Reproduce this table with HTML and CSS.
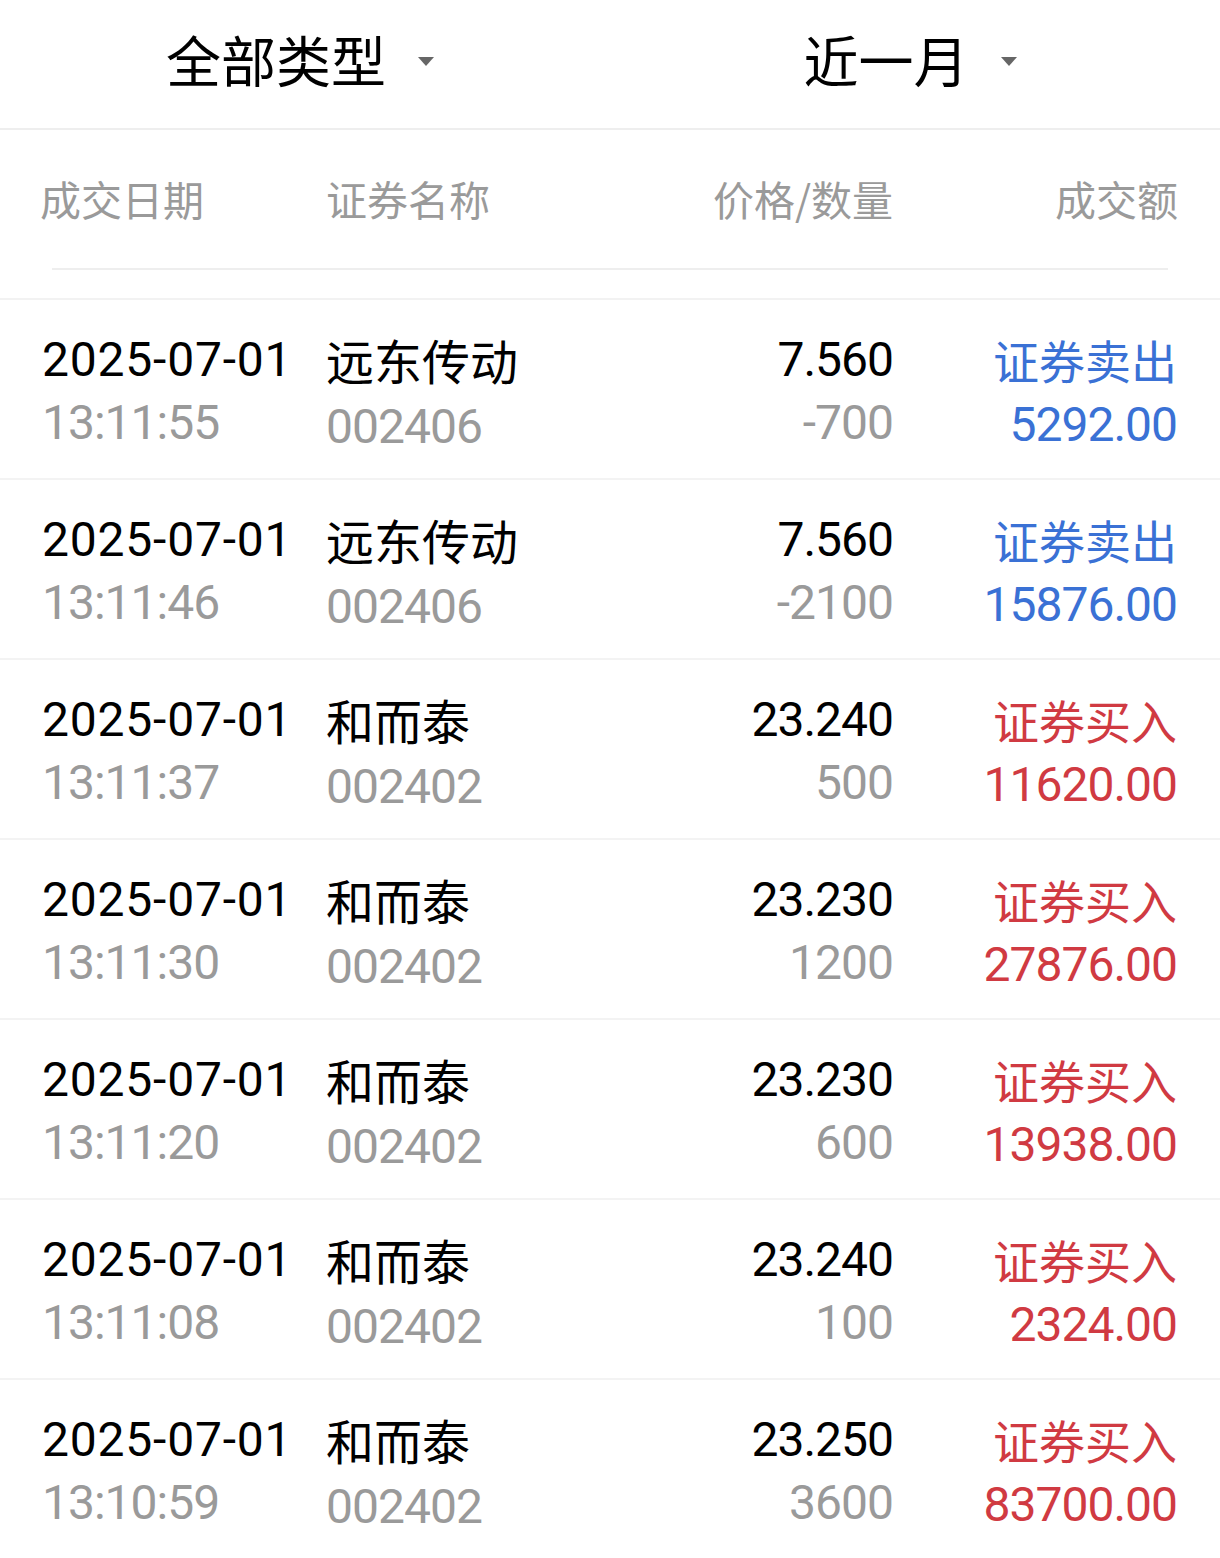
FILE: index.html
```html
<!DOCTYPE html>
<html lang="zh-CN">
<head>
<meta charset="utf-8">
<title>成交记录</title>
<link rel="stylesheet" href="styles.css">
</head>
<body>
<div class="page">
  <div class="tabs">
    <div class="tab"><span class="tab-label">全部类型</span><span class="caret"></span></div>
    <div class="tab"><span class="tab-label">近一月</span><span class="caret"></span></div>
  </div>

  <div class="thead">
    <div class="thead-row">
      <div class="th c-date">成交日期</div>
      <div class="th c-name">证券名称</div>
      <div class="th c-price">价格/数量</div>
      <div class="th c-amt">成交额</div>
    </div>
    <div class="thead-line"></div>
  </div>

  <div class="list">
    <div class="row sell">
      <div class="cell c-date"><span class="l1 date">2025-07-01</span><span class="l2">13:11:55</span></div>
      <div class="cell c-name"><span class="l1">远东传动</span><span class="l2 code">002406</span></div>
      <div class="cell c-price"><span class="l1">7.560</span><span class="l2">-700</span></div>
      <div class="cell c-amt"><span class="l1 kind">证券卖出</span><span class="l2 money">5292.00</span></div>
    </div>
    <div class="row sell">
      <div class="cell c-date"><span class="l1 date">2025-07-01</span><span class="l2">13:11:46</span></div>
      <div class="cell c-name"><span class="l1">远东传动</span><span class="l2 code">002406</span></div>
      <div class="cell c-price"><span class="l1">7.560</span><span class="l2">-2100</span></div>
      <div class="cell c-amt"><span class="l1 kind">证券卖出</span><span class="l2 money">15876.00</span></div>
    </div>
    <div class="row buy">
      <div class="cell c-date"><span class="l1 date">2025-07-01</span><span class="l2">13:11:37</span></div>
      <div class="cell c-name"><span class="l1">和而泰</span><span class="l2 code">002402</span></div>
      <div class="cell c-price"><span class="l1">23.240</span><span class="l2">500</span></div>
      <div class="cell c-amt"><span class="l1 kind">证券买入</span><span class="l2 money">11620.00</span></div>
    </div>
    <div class="row buy">
      <div class="cell c-date"><span class="l1 date">2025-07-01</span><span class="l2">13:11:30</span></div>
      <div class="cell c-name"><span class="l1">和而泰</span><span class="l2 code">002402</span></div>
      <div class="cell c-price"><span class="l1">23.230</span><span class="l2">1200</span></div>
      <div class="cell c-amt"><span class="l1 kind">证券买入</span><span class="l2 money">27876.00</span></div>
    </div>
    <div class="row buy">
      <div class="cell c-date"><span class="l1 date">2025-07-01</span><span class="l2">13:11:20</span></div>
      <div class="cell c-name"><span class="l1">和而泰</span><span class="l2 code">002402</span></div>
      <div class="cell c-price"><span class="l1">23.230</span><span class="l2">600</span></div>
      <div class="cell c-amt"><span class="l1 kind">证券买入</span><span class="l2 money">13938.00</span></div>
    </div>
    <div class="row buy">
      <div class="cell c-date"><span class="l1 date">2025-07-01</span><span class="l2">13:11:08</span></div>
      <div class="cell c-name"><span class="l1">和而泰</span><span class="l2 code">002402</span></div>
      <div class="cell c-price"><span class="l1">23.240</span><span class="l2">100</span></div>
      <div class="cell c-amt"><span class="l1 kind">证券买入</span><span class="l2 money">2324.00</span></div>
    </div>
    <div class="row buy">
      <div class="cell c-date"><span class="l1 date">2025-07-01</span><span class="l2">13:10:59</span></div>
      <div class="cell c-name"><span class="l1">和而泰</span><span class="l2 code">002402</span></div>
      <div class="cell c-price"><span class="l1">23.250</span><span class="l2">3600</span></div>
      <div class="cell c-amt"><span class="l1 kind">证券买入</span><span class="l2 money">83700.00</span></div>
    </div>
  </div>
</div>
</body>
</html>
```

FILE: styles.css
```css
html, body {
  margin: 0;
  padding: 0;
  background: #ffffff;
}

body {
  font-family: Roboto, "Noto Sans CJK SC", "Noto Sans", sans-serif;
  color: #000;
}

.page {
  width: 1220px;
}

/* ---------- filter tabs ---------- */
.tabs {
  display: flex;
  height: 130px;
  box-sizing: border-box;
  border-bottom: 2px solid #eeeeee;
}

.tab {
  flex: 1;
  display: flex;
  align-items: center;
  justify-content: center;
  gap: 32px;
  padding-bottom: 12px;
  padding-right: 10px;
}

.tab-label {
  font-family: "Noto Sans CJK SC", sans-serif;
  font-size: 55px;
  line-height: 1;
  color: #000;
}

.caret {
  width: 0;
  height: 0;
  border-left: 8px solid transparent;
  border-right: 8px solid transparent;
  border-top: 9px solid #666666;
  margin-top: 6px;
}

/* ---------- table header ---------- */
.thead {
  height: 170px;
  box-sizing: border-box;
  border-bottom: 2px solid #f2f2f2;
}

.thead-row {
  display: grid;
  grid-template-columns: 286px 1fr 285px 285px;
  align-items: center;
  height: 138px;
  padding: 0 42px 2px 40px;
  box-sizing: border-box;
}

.thead-line {
  height: 2px;
  margin: 0 52px;
  background: #eeeeee;
}

.th {
  font-family: "Noto Sans CJK SC", sans-serif;
  font-size: 41px;
  color: #9a9a9a;
  line-height: 1;
}

/* ---------- rows ---------- */
.row {
  display: grid;
  grid-template-columns: 284px 1fr 264px 284px;
  height: 180px;
  box-sizing: border-box;
  padding: 28px 43px 0 42px;
  border-bottom: 2px solid #f3f3f3;
}

.cell {
  display: flex;
  flex-direction: column;
}

.c-price, .c-amt {
  align-items: flex-end;
  text-align: right;
}

.c-date, .c-name {
  align-items: flex-start;
}

.l1 {
  font-size: 48px;
  line-height: 62px;
  height: 62px;
  color: #000;
  letter-spacing: -1px;
  padding-top: 1px;
}

.l2 {
  font-size: 48px;
  line-height: 62px;
  height: 62px;
  color: #9a9a9a;
  letter-spacing: -1px;
  padding-top: 1px;
}

.date {
  letter-spacing: 0.8px;
}

.c-name .l1 {
  font-family: "Noto Sans CJK SC", sans-serif;
  font-size: 48px;
  letter-spacing: 0;
  padding-top: 0;
}

.code {
  padding-top: 6px;
}

.kind {
  font-family: "Noto Sans CJK SC", sans-serif;
  font-size: 46px;
  letter-spacing: 0;
  padding-top: 0;
}

.money {
  padding-top: 4px;
}

.sell .kind, .sell .money { color: #3a71d5; }
.buy .kind, .buy .money { color: #d03a42; }
```
